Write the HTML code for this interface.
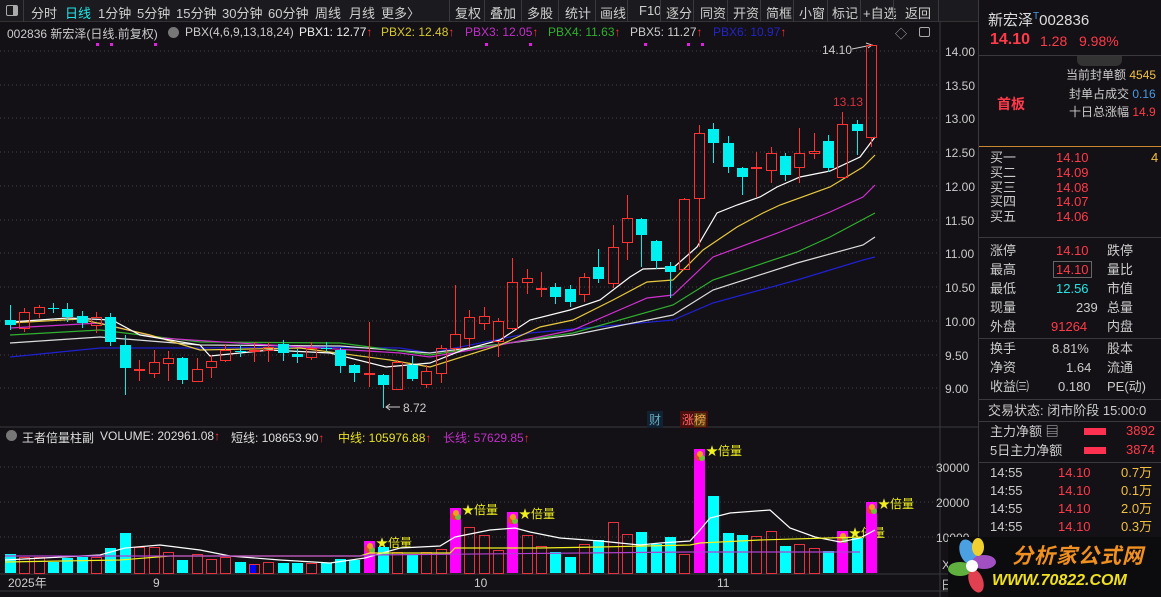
<!DOCTYPE html>
<html><head><meta charset="utf-8">
<style>
*{margin:0;padding:0;box-sizing:border-box}
body{width:1161px;height:597px;overflow:hidden;background:#131115;font-family:"Liberation Sans","Noto Sans CJK SC",sans-serif;color:#ccc;position:relative}
.a{position:absolute;white-space:nowrap}
.tb{position:absolute;left:0;top:0;width:978px;height:22px;background:#1b1a1e;border-bottom:1px solid #333;font-size:13px}
.tb span{position:absolute;top:3px;color:#cfcfcf}
.tb i{position:absolute;top:0;width:1px;height:22px;background:#3a3a3e}
.rp{position:absolute;left:978px;top:0;width:183px;height:597px;background:#131115;border-left:1px solid #3a3a3e;font-size:13px;line-height:15px}
.rp .a{color:#ccc}
.red{color:#ff3a4a!important}.cy{color:#22e6e6!important}.yl{color:#f0c040!important}
.hl{position:absolute;left:0;width:183px;height:1px;background:#3a3a3e}
.h{font-size:12px;top:25px}
.v{font-size:12px;top:429px}
</style></head><body>
<div class="tb">
<div style="position:absolute;left:6px;top:5px;width:12px;height:11px;border:1px solid #aaa;border-radius:2px"><div style="position:absolute;right:0;top:0;width:4px;height:9px;background:#aaa"></div></div>
<i style="left:23px"></i>
<span style="left:31px">分时</span><span style="left:65px;color:#22e6e6">日线</span><span style="left:98px">1分钟</span><span style="left:137px">5分钟</span><span style="left:176px">15分钟</span><span style="left:222px">30分钟</span><span style="left:268px">60分钟</span><span style="left:315px">周线</span><span style="left:349px">月线</span><span style="left:381px">更多〉</span>
<i style="left:449px"></i><span style="left:455px">复权</span><i style="left:484px"></i><span style="left:490px">叠加</span><i style="left:521px"></i><span style="left:527px">多股</span><i style="left:558px"></i><span style="left:565px">统计</span><i style="left:595px"></i><span style="left:600px">画线</span><i style="left:627px"></i><span style="left:639px">F10</span><i style="left:660px"></i><span style="left:666px">逐分</span><i style="left:693px"></i><span style="left:700px">同资</span><i style="left:727px"></i><span style="left:733px">开资</span><i style="left:760px"></i><span style="left:766px">简框</span><i style="left:793px"></i><span style="left:799px">小窗</span><i style="left:827px"></i><span style="left:832px">标记</span><i style="left:860px"></i><span style="left:863px">+自选</span><i style="left:893px"></i><span style="left:905px">返回</span><i style="left:938px"></i>
</div>

<div class="a h" style="left:7px">002836 新宏泽(日线.前复权)</div>
<div class="a" style="left:168px;top:27px;width:11px;height:11px;border-radius:50%;background:#777"></div>
<div class="a h" style="left:185px">PBX(4,6,9,13,18,24)</div>
<div class="a h" style="left:299px;color:#eee">PBX1: 12.77<span style="color:#f33">↑</span></div>
<div class="a h" style="left:381px;color:#d8c830">PBX2: 12.48<span style="color:#f33">↑</span></div>
<div class="a h" style="left:465px;color:#c030c8">PBX3: 12.05<span style="color:#f33">↑</span></div>
<div class="a h" style="left:548px;color:#30b030">PBX4: 11.63<span style="color:#f33">↑</span></div>
<div class="a h" style="left:630px;color:#ccc">PBX5: 11.27<span style="color:#f33">↑</span></div>
<div class="a h" style="left:713px;color:#2424c8">PBX6: 10.97<span style="color:#f33">↑</span></div>
<div class="a" style="left:895px;top:25px;font-size:12px;color:#aaa">◇</div>
<div class="a" style="left:919px;top:27px;width:11px;height:10px;border:1px solid #aaa;border-radius:2px"></div>

<svg class="a" style="left:0;top:0" width="978" height="597" id="ch">
<g stroke="#444" stroke-dasharray="1,3" stroke-width="1">
<line x1="0" y1="51" x2="940" y2="51"/><line x1="0" y1="85" x2="940" y2="85"/><line x1="0" y1="118" x2="940" y2="118"/><line x1="0" y1="152" x2="940" y2="152"/><line x1="0" y1="186" x2="940" y2="186"/><line x1="0" y1="220" x2="940" y2="220"/><line x1="0" y1="253" x2="940" y2="253"/><line x1="0" y1="287" x2="940" y2="287"/><line x1="0" y1="321" x2="940" y2="321"/><line x1="0" y1="355" x2="940" y2="355"/><line x1="0" y1="388" x2="940" y2="388"/>
<line x1="0" y1="467" x2="940" y2="467"/><line x1="0" y1="502" x2="940" y2="502"/><line x1="0" y1="537" x2="940" y2="537"/>
</g>
<line x1="940" y1="22" x2="940" y2="597" stroke="#3a3a3e"/>
<line x1="0" y1="427" x2="978" y2="427" stroke="#3a3a3e"/>
<line x1="0" y1="574" x2="978" y2="574" stroke="#3a3a3e"/>
<line x1="0" y1="591" x2="978" y2="591" stroke="#3a3a3e"/>
<g fill="#ccc" font-size="12" font-family="Liberation Sans">
<text x="945" y="56">14.00</text><text x="945" y="90">13.50</text><text x="945" y="123">13.00</text><text x="945" y="157">12.50</text><text x="945" y="191">12.00</text><text x="945" y="225">11.50</text><text x="945" y="258">11.00</text><text x="945" y="292">10.50</text><text x="945" y="326">10.00</text><text x="945" y="360">9.50</text><text x="945" y="393">9.00</text>
<text x="936" y="472">30000</text><text x="936" y="507">20000</text><text x="936" y="542">10000</text>
<text x="942" y="569">X10</text><text x="941" y="589">日</text>
<text x="8" y="587">2025年</text><text x="153" y="587">9</text><text x="474" y="587">10</text><text x="717" y="587">11</text>
<text x="822" y="54">14.10</text>
<text x="403" y="412">8.72</text>
</g>
<text x="833" y="106" fill="#e03040" font-size="12" font-family="Liberation Sans">13.13</text>
<path d="M852 49 L872 45 M866 43 L872 45 L868 48" stroke="#ccc" fill="none"/>
<path d="M386 407 L400 407 M390 404 L386 407 L390 410" stroke="#ccc" fill="none"/>
<g id="ma"></g><g id="cs"></g><g id="vol"></g>
</svg>

<div class="a" style="left:647px;top:411px;font-size:12px;color:#6ab;background:#123;padding:0 2px">财</div>
<div class="a" style="left:680px;top:411px;font-size:12px;color:#f66;background:#4a1010;padding:0 2px">涨<span style="background:#5a3a10;color:#e8a050">榜</span></div>

<div class="a" style="left:6px;top:430px;width:11px;height:11px;border-radius:50%;background:#777"></div>
<div class="a v" style="left:22px;color:#ddd">王者倍量柱副</div>
<div class="a v" style="left:100px;color:#ddd">VOLUME: 202961.08<span style="color:#f33">↑</span></div>
<div class="a v" style="left:231px;color:#ddd">短线: 108653.90<span style="color:#f33">↑</span></div>
<div class="a v" style="left:338px;color:#e8e020">中线: 105976.88<span style="color:#f33">↑</span></div>
<div class="a v" style="left:443px;color:#c030c8">长线: 57629.85<span style="color:#f33">↑</span></div>

<div class="rp">
<div class="a" style="left:9px;top:8px;font-size:15px;line-height:18px;color:#ddd">新宏泽<sup style="color:#4a9ae0;font-size:10px">T</sup>002836</div>
<div class="a red" style="left:11px;top:31px;font-size:16px;line-height:18px;font-weight:bold">14.10</div>
<div class="a red" style="left:61px;top:32px;font-size:14px;line-height:18px">1.28</div>
<div class="a red" style="left:100px;top:32px;font-size:14px;line-height:18px">9.98%</div>
<div class="hl" style="top:55px"></div>
<div style="position:absolute;left:98px;top:56px;width:45px;height:10px;background:#333;border-radius:0 0 6px 6px"></div>
<div class="a" style="left:87px;top:68px;font-size:12px">当前封单额 <span class="yl">4545</span></div>
<div class="a" style="left:90px;top:87px;font-size:12px">封单占成交 <span style="color:#4a9ae0">0.16</span></div>
<div class="a" style="left:90px;top:105px;font-size:12px">十日总涨幅 <span class="red">14.9</span></div>
<div class="a red" style="left:18px;top:97px;font-size:14px;font-weight:bold">首板</div>
<div class="hl" style="top:146px;background:#c88830"></div>
<div class="a" style="left:11px;top:150px">买一</div><div class="a red" style="left:77px;top:150px">14.10</div><div class="a yl" style="left:172px;top:150px">4</div>
<div class="a" style="left:11px;top:165px">买二</div><div class="a red" style="left:77px;top:165px">14.09</div>
<div class="a" style="left:11px;top:180px">买三</div><div class="a red" style="left:77px;top:180px">14.08</div>
<div class="a" style="left:11px;top:194px">买四</div><div class="a red" style="left:77px;top:194px">14.07</div>
<div class="a" style="left:11px;top:209px">买五</div><div class="a red" style="left:77px;top:209px">14.06</div>
<div class="hl" style="top:237px"></div>
<div class="a" style="left:11px;top:243px">涨停</div><div class="a red" style="left:77px;top:243px">14.10</div><div class="a" style="left:128px;top:243px">跌停</div>
<div class="a" style="left:11px;top:262px">最高</div><div class="a red" style="left:74px;top:261px;border:1px solid #666;padding:0 2px">14.10</div><div class="a" style="left:128px;top:262px">量比</div>
<div class="a" style="left:11px;top:281px">最低</div><div class="a cy" style="left:77px;top:281px">12.56</div><div class="a" style="left:128px;top:281px">市值</div>
<div class="a" style="left:11px;top:300px">现量</div><div class="a" style="left:97px;top:300px">239</div><div class="a" style="left:128px;top:300px">总量</div>
<div class="a" style="left:11px;top:319px">外盘</div><div class="a red" style="left:72px;top:319px">91264</div><div class="a" style="left:128px;top:319px">内盘</div>
<div class="hl" style="top:338px"></div>
<div class="a" style="left:11px;top:341px">换手</div><div class="a" style="left:73px;top:341px">8.81%</div><div class="a" style="left:128px;top:341px">股本</div>
<div class="a" style="left:11px;top:360px">净资</div><div class="a" style="left:87px;top:360px">1.64</div><div class="a" style="left:128px;top:360px">流通</div>
<div class="a" style="left:11px;top:379px">收益㈢</div><div class="a" style="left:79px;top:379px">0.180</div><div class="a" style="left:128px;top:379px">PE(动)</div>
<div class="hl" style="top:399px"></div>
<div class="a" style="left:9px;top:403px">交易状态: 闭市阶段 15:00:0</div>
<div class="hl" style="top:421px"></div>
<div class="a" style="left:11px;top:424px">主力净额 ▤</div><div style="position:absolute;left:105px;top:428px;width:22px;height:7px;background:#ff3050"></div><div class="a red" style="left:147px;top:423px">3892</div>
<div class="a" style="left:11px;top:443px">5日主力净额</div><div style="position:absolute;left:105px;top:447px;width:22px;height:7px;background:#ff3050"></div><div class="a red" style="left:147px;top:442px">3874</div>
<div class="hl" style="top:462px"></div>
<div class="a" style="left:11px;top:465px">14:55</div><div class="a red" style="left:79px;top:465px">14.10</div><div class="a yl" style="left:142px;top:465px">0.7万</div>
<div class="a" style="left:11px;top:483px">14:55</div><div class="a red" style="left:79px;top:483px">14.10</div><div class="a yl" style="left:142px;top:483px">0.1万</div>
<div class="a" style="left:11px;top:501px">14:55</div><div class="a red" style="left:79px;top:501px">14.10</div><div class="a yl" style="left:142px;top:501px">2.0万</div>
<div class="a" style="left:11px;top:519px">14:55</div><div class="a red" style="left:79px;top:519px">14.10</div><div class="a yl" style="left:142px;top:519px">0.3万</div>
</div>

<div style="position:absolute;left:948px;top:537px;width:213px;height:60px;background:#0c0b0d"></div>
<svg class="a" style="left:948px;top:537px" width="48" height="60">
<ellipse cx="20" cy="15" rx="8" ry="13" fill="#4aa0e0" transform="rotate(-20 20 15)"/>
<ellipse cx="36" cy="25" rx="12" ry="7" fill="#a050c0"/>
<ellipse cx="12" cy="32" rx="12" ry="7" fill="#60b040"/>
<ellipse cx="28" cy="44" rx="7" ry="12" fill="#e04050" transform="rotate(-20 28 44)"/>
<ellipse cx="30" cy="10" rx="6" ry="9" fill="#f0d030"/>
<circle cx="24" cy="29" r="6" fill="#fff"/>
</svg>
<div class="a" style="left:1012px;top:540px;font-size:21px;font-weight:bold;font-style:italic;color:#f09020;letter-spacing:1px">分析家公式网</div>
<div class="a" style="left:992px;top:572px;font-size:16px;font-weight:bold;font-style:italic;color:#f0e020">WWW.70822.COM</div>

<script>
var C=[[320,325,305,330,'c'],[312,328,308,332,'r'],[307,313,305,318,'r'],[308,309,303,313,'c'],[309,317,303,322,'c'],[316,323,311,328,'c'],[317,325,312,333,'r'],[317,342,313,346,'c'],[345,368,335,395,'c'],[369,370,360,381,'r'],[362,373,350,378,'r'],[358,363,351,381,'r'],[358,380,357,384,'c'],[369,381,358,382,'r'],[361,367,355,378,'r'],[350,360,344,362,'r'],[351,352,345,357,'c'],[350,351,342,362,'r'],[347,350,342,362,'r'],[344,353,340,361,'c'],[354,357,349,363,'c'],[348,357,342,360,'r'],[348,349,342,352,'c'],[350,366,348,373,'c'],[365,373,364,382,'c'],[373,374,322,387,'r'],[375,385,374,408,'c'],[362,389,360,389,'r'],[365,379,356,381,'c'],[371,384,365,388,'r'],[348,373,345,383,'r'],[334,348,285,352,'r'],[317,338,310,348,'r'],[316,323,307,330,'r'],[321,341,318,357,'r'],[282,328,258,330,'r'],[278,282,269,294,'r'],[288,289,272,297,'r'],[287,297,283,304,'c'],[289,302,285,307,'c'],[277,294,273,302,'r'],[267,279,249,283,'c'],[247,283,225,288,'r'],[218,242,195,260,'r'],[219,235,218,267,'c'],[241,261,240,269,'c'],[266,272,262,298,'c'],[199,269,198,270,'r'],[133,198,125,247,'r'],[129,143,123,163,'c'],[143,167,136,173,'c'],[168,177,167,195,'c'],[167,168,152,197,'r'],[153,170,147,183,'r'],[156,175,153,181,'c'],[153,167,128,183,'r'],[151,153,133,159,'r'],[141,168,135,172,'c'],[124,177,112,178,'r'],[124,131,120,155,'c'],[45,137,44,147,'r']];
var V="554c557r557r562c558c557c557r548c533c547r547r552r560c554r559r557r562c564r562r563c563c563r563c559c560c541m547c552r555c552r549r508m527r535r550r512m535r546r552c557c544r540c522r534r532c544c537c554r449m496c533c535c536r531r546c544r548r551c531m538c502m".match(/\d+[crm]/g);
var ns="http://www.w3.org/2000/svg";
function el(p,t,a){var e=document.createElementNS(ns,t);for(var k in a)e.setAttribute(k,a[k]);document.getElementById(p).appendChild(e);return e}
C.forEach(function(c,i){var x=Math.round(10+14.35*i);var col=c[4]=='r'?'#ff3232':'#00f0f0';
el('cs','line',{x1:x+.5,y1:c[2],x2:x+.5,y2:c[0],stroke:col});el('cs','line',{x1:x+.5,y1:c[1],x2:x+.5,y2:c[3],stroke:col});
var h=Math.max(1,c[1]-c[0]);
if(c[4]=='r')el('cs','rect',{x:x-4.5,y:c[0]+.5,width:10,height:h,fill:'none',stroke:col});else el('cs','rect',{x:x-5,y:c[0],width:11,height:h,fill:col});});
V.forEach(function(v,i){var x=Math.round(10+14.35*i),y=parseInt(v),t=v.slice(-1);
if(t=='r')el('vol','rect',{x:x-4.5,y:y+.5,width:10,height:573-y,fill:'none',stroke:'#e83040'});
else el('vol','rect',{x:x-5,y:y,width:11,height:573-y,fill:t=='m'?'#ff00ff':'#00ffff'});
if(t=='m'){el('vol','circle',{cx:x,cy:y+8,r:4,fill:'#e84030'});el('vol','circle',{cx:x+3,cy:y+9,r:3,fill:'#70c040'});el('vol','circle',{cx:x+1,cy:y+5,r:3,fill:'#f0a020'});
var tx=el('vol','text',{x:x+7,y:y+6,fill:'#f0f020','font-size':12,'font-family':'Liberation Sans,Noto Sans CJK SC,sans-serif'});tx.textContent='★倍量';}});
el('vol','rect',{x:250,y:565,width:6,height:8,fill:'#0000ff'});
function pl(p,pts,col){el(p,'polyline',{points:pts,fill:'none',stroke:col,'stroke-width':1.2});}
pl('vol',"5,560 100,555 125,548 160,545 200,550 230,556 280,560 330,563 365,558 400,548 440,546 455,537 490,530 515,528 530,532 560,538 600,541 640,545 660,543 690,541 700,530 710,518 730,513 770,510 790,528 815,537 840,542 860,538 875,530",'#fff');
pl('vol',"5,562 120,560 170,556 360,556 370,553 450,553 455,548 540,548 600,547 690,545 700,543 760,540 862,537",'#f0f020');
pl('vol',"5,556 360,556 370,555 690,552 860,552",'#b040d0');
pl('ma',"10,357 100,348 200,348 300,347 400,348 430,353 530,333 673,320 713,303 797,280 863,260 875,257",'#2020d0');
pl('ma',"10,343 100,337 200,345 340,346 430,353 573,335 673,315 713,290 797,263 863,245 875,237",'#ddd');
pl('ma',"10,335 100,330 200,342 340,343 430,355 573,333 673,305 713,280 797,252 830,237 875,213",'#30b030');
pl('ma',"10,328 100,323 160,338 270,345 400,353 430,357 500,345 573,330 647,298 673,295 713,257 780,232 830,212 863,197 875,185",'#d030d0');
pl('ma',"10,323 80,319 150,335 200,350 300,348 390,360 430,367 500,345 540,327 573,320 613,300 647,282 673,280 703,250 737,227 763,213 780,205 830,187 863,167 875,155",'#e8c840');
pl('ma',"10,322 68,318 112,320 140,335 200,345 210,356 270,350 330,353 386,367 430,363 463,350 500,340 530,320 570,310 600,300 630,277 643,269 673,268 697,247 717,213 737,205 760,197 777,187 800,177 830,171 860,157 875,137",'#fff');
[[96,43],[110,43],[154,43],[485,43],[529,43],[644,43],[687,43],[701,43]].forEach(function(p){el('ma','rect',{x:p[0],y:p[1],width:3,height:3,fill:'#e020e0'})});
</script>
</body></html>
